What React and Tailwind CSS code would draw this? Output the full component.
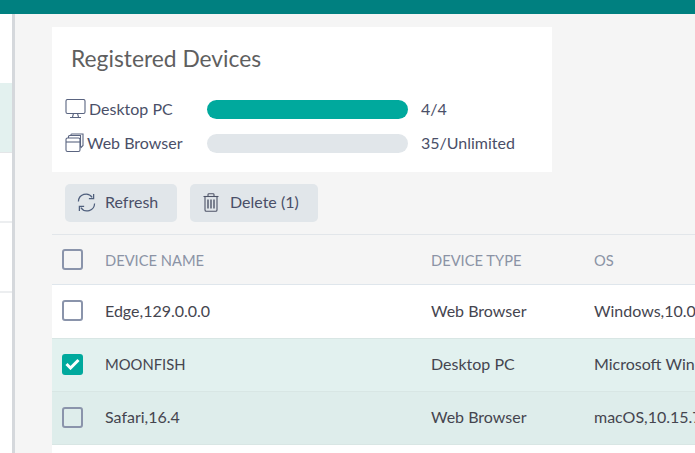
import React from "react";

const DesktopIcon = () => (
  <svg width="21" height="20" viewBox="0 0 21 20" fill="none" stroke="currentColor" strokeWidth="1.1" className="text-[#5a6480]">
    <rect x="1" y="0.5" width="19" height="14" rx="1.5" />
    <path d="M8.5 14.5 L7.5 18 M12.5 14.5 L13.5 18 M5 18.5 H16" />
  </svg>
);

const BrowserIcon = () => (
  <svg width="19" height="20" viewBox="0 0 19 20" fill="none" stroke="currentColor" strokeWidth="1.1" className="text-[#5a6480]">
    <rect x="1" y="5" width="14" height="13.5" rx="1.5" />
    <path d="M1 9 H15" />
    <path d="M3.5 5 V3.5 Q3.5 2.5 4.5 2.5 H15.5 V14 M6 2.5 V1.5 Q6 1 7 1 H18 V12.5 L15.5 15" />
  </svg>
);

const RefreshIcon = () => (
  <svg width="19" height="19" viewBox="0 0 20 20" fill="none" stroke="currentColor" strokeWidth="1.3" className="text-[#4f5f7d]">
    <path d="M1.5 9 A8 8 0 0 1 16 4.5" />
    <path d="M17.5 1 V6 H12.5" />
    <path d="M18.5 11 A8 8 0 0 1 4 15.5" />
    <path d="M2.5 19 V14 H7.5" />
  </svg>
);

const TrashIcon = () => (
  <svg width="16" height="19" viewBox="0 0 16 19" fill="none" stroke="currentColor" strokeWidth="1.1" className="text-[#4f5468]">
    <path d="M0.5 3.5 H15.5" />
    <path d="M5 3.5 V1.5 Q5 0.7 6 0.7 H10 Q11 0.7 11 1.5 V3.5" />
    <path d="M2 3.5 V17 Q2 18.3 3.3 18.3 H12.7 Q14 18.3 14 17 V3.5" />
    <path d="M5 6.5 V15.5 M8 6.5 V15.5 M11 6.5 V15.5" strokeWidth="1.4" />
  </svg>
);

const Checkbox = ({ checked }) =>
  checked ? (
    <span className="flex h-[21px] w-[21px] items-center justify-center rounded-[3px] bg-[#00a99d]">
      <svg width="15" height="12" viewBox="0 0 15 12" fill="none" stroke="white" strokeWidth="3">
        <path d="M1.5 6 L5.5 10 L13.5 2" />
      </svg>
    </span>
  ) : (
    <span className="block h-[21px] w-[21px] rounded-[3px] border-2 border-[#8a94ab]" />
  );

const rows = [
  { name: "Edge,129.0.0.0", type: "Web Browser", os: "Windows,10.0", bg: "bg-white", h: "h-[54px]", nameSize: "text-[16px]" },
  { name: "MOONFISH", type: "Desktop PC", os: "Microsoft Windows 11", bg: "bg-[#e2f1ef]", h: "h-[53px]", nameSize: "text-[14.8px]", checked: true },
  { name: "Safari,16.4", type: "Web Browser", os: "macOS,10.15.7", bg: "bg-[#deedeb]", h: "h-[53px]", nameSize: "text-[16px]" },
];

export default function App() {
  return (
    <div className="flex h-[453px] w-[695px] flex-col overflow-hidden bg-[#f5f5f5] font-['Lato',sans-serif] text-[16px] text-[#4a4f68]">
      <div className="h-[14px] shrink-0 bg-[#008080]" />
      <div className="flex min-h-0 flex-1">
        {/* Sidebar */}
        <div className="flex w-[15px] shrink-0 flex-col border-r-[3px] border-[#d5d8dc] bg-white pt-[69px]">
          <div className="h-[70px] border-b border-[#e4e6e8] bg-[#e3f1ef]" />
          <div className="h-[70px] border-b-2 border-[#eceef0]" />
          <div className="h-[70px] border-b-2 border-[#eceef0]" />
        </div>

        <div className="flex min-w-0 flex-1 flex-col pl-[37px] pt-[13px]">
          {/* Usage card */}
          <div className="h-[145px] w-[500px] shrink-0 bg-white pl-[13px] pt-[15px]">
            <h2 className="pl-[6px] text-[22.8px] leading-[32px] text-[#5f5f5f]">Registered Devices</h2>
            <div className="mt-[25px] flex h-[20px] items-center">
              <span className="flex w-[142px] shrink-0 items-center gap-[3px]">
                <DesktopIcon />
                Desktop PC
              </span>
              <div className="h-[19px] w-[201px] rounded-full bg-[#00a99d]" />
              <span className="ml-[13px]">4/4</span>
            </div>
            <div className="mt-[14px] flex h-[20px] items-center">
              <span className="flex w-[142px] shrink-0 items-center gap-[3px]">
                <BrowserIcon />
                Web Browser
              </span>
              <div className="h-[19px] w-[201px] rounded-full bg-[#e1e6ea]" />
              <span className="ml-[13px]">35/Unlimited</span>
            </div>
          </div>

          {/* Toolbar */}
          <div className="flex h-[63px] shrink-0 items-start gap-[13px] border-b border-[#e2e6ea] pl-[13px] pt-[12px]">
            <button className="flex h-[38px] w-[112px] items-center gap-[9px] rounded-[5px] bg-[#e1e6ea] pb-[2px] pl-[12px]">
              <RefreshIcon />
              Refresh
            </button>
            <button className="flex h-[38px] w-[128px] items-center gap-[11px] rounded-[5px] bg-[#e1e6ea] pb-[2px] pl-[13px]">
              <TrashIcon />
              Delete (1)
            </button>
          </div>

          {/* Table */}
          <div className="flex h-[50px] shrink-0 items-center border-b border-[#dfe6ec] text-[14.7px] text-[#8b93a5]">
            <div className="w-[53px] shrink-0 pl-[10px]">
              <Checkbox />
            </div>
            <div className="w-[326px] shrink-0 pt-[2px]">DEVICE NAME</div>
            <div className="w-[163px] shrink-0 pt-[2px]">DEVICE TYPE</div>
            <div className="whitespace-nowrap pt-[2px]">OS</div>
          </div>
          <div className="flex-1 bg-white text-[#45454f]">
            {rows.map((row) => (
              <div key={row.name} className={`flex items-center border-b border-[#d8e6e4] pb-[2px] ${row.h} ${row.bg}`}>
                <div className="w-[53px] shrink-0 pl-[10px]">
                  <Checkbox checked={row.checked} />
                </div>
                <div className={`w-[326px] shrink-0 ${row.nameSize}`}>{row.name}</div>
                <div className="w-[163px] shrink-0">{row.type}</div>
                <div className="whitespace-nowrap">{row.os}</div>
              </div>
            ))}
          </div>
        </div>
      </div>
    </div>
  );
}
